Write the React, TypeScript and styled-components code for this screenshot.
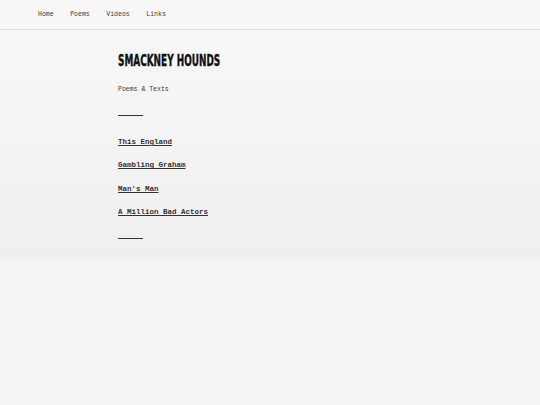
import React from "react";
import styled, { createGlobalStyle } from "styled-components";

const mono = `"Courier", "Nimbus Mono PS", "Nimbus Mono L", "FreeMono", "Liberation Mono", "Courier New", monospace`;

const Global = createGlobalStyle`
  html, body { margin: 0; padding: 0; background: #f4f4f4; }
  body { font-family: ${mono}; color: #333; -webkit-font-smoothing: antialiased; }
`;

const Page = styled.div`
  width: 540px;
  min-height: 405px;
  background: #f4f4f4;
`;

const Header = styled.header`
  height: 29px;
  background: #f7f7f7;
  border-bottom: 1px solid #e0e0e0;
  display: flex;
  align-items: center;
  padding-left: 38px;
  box-sizing: content-box;
`;

const Nav = styled.nav`
  display: flex;
  gap: 16.6px;
  margin-top: 2px;
`;

const NavLink = styled.a`
  font-family: ${mono};
  font-size: 6.5px;
  color: #3a3a3a;
  text-decoration: none;
  line-height: 1;
`;

const Main = styled.main`
  height: 229px;
  background: linear-gradient(to bottom, #f7f7f7 0%, #efefef 100%);
  padding-left: 118px;
  display: flex;
  flex-direction: column;
  align-items: flex-start;
`;

const Title = styled.h1`
  margin: 23px 0 0 0;
  font-family: "Liberation Sans Narrow", "DejaVu Sans Condensed", "Liberation Sans", sans-serif;
  font-weight: 700;
  font-size: 16.5px;
  line-height: 16px;
  color: #111;
  text-transform: uppercase;
  white-space: nowrap;
  -webkit-text-stroke: 0.4px #111;
  transform: scaleX(0.6);
  transform-origin: left center;
`;

const Subtitle = styled.p`
  margin: 17px 0 0 0;
  font-size: 6.5px;
  line-height: 8px;
  color: #3a3a3a;
`;

const Rule = styled.div<{ $top: number }>`
  width: 25px;
  height: 1px;
  background: #333;
  margin-top: ${(p) => p.$top}px;
`;

const List = styled.ul`
  list-style: none;
  margin: 22px 0 0 0;
  padding: 0;
  display: flex;
  flex-direction: column;
  gap: 15.3px;
`;

const Item = styled.li`
  font-size: 7.5px;
  line-height: 8px;
`;

const PoemLink = styled.a`
  color: #333;
  font-weight: 700;
  text-decoration: underline;
  text-underline-offset: 1px;
`;

const poems = ["This England", "Gambling Graham", "Man's Man", "A Million Bad Actors"];

export default function App() {
  return (
    <Page>
      <Global />
      <Header>
        <Nav>
          <NavLink href="#">Home</NavLink>
          <NavLink href="#">Poems</NavLink>
          <NavLink href="#">Videos</NavLink>
          <NavLink href="#">Links</NavLink>
        </Nav>
      </Header>
      <Main>
        <Title>Smackney Hounds</Title>
        <Subtitle>Poems &amp; Texts</Subtitle>
        <Rule $top={21} />
        <List>
          {poems.map((p) => (
            <Item key={p}>
              <PoemLink href="#">{p}</PoemLink>
            </Item>
          ))}
        </List>
        <Rule $top={22} />
      </Main>
    </Page>
  );
}
